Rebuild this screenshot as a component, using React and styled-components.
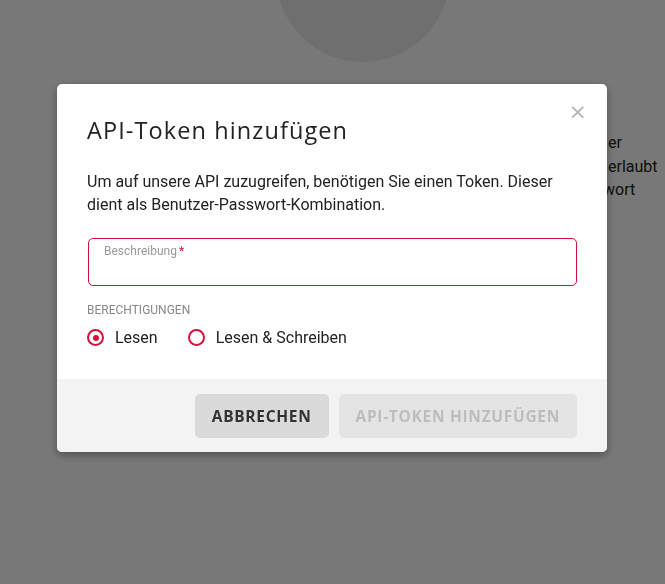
import React from "react";
import styled, { createGlobalStyle } from "styled-components";

const Global = createGlobalStyle`
  html, body { margin: 0; padding: 0; background: #ffffff; }
  body { font-family: Roboto, "Liberation Sans", sans-serif; color: #222; overflow: hidden; }
  * { box-sizing: border-box; }
`;

const Page = styled.div`
  width: 665px;
  height: 584px;
  position: relative;
  overflow: hidden;
  background: #fff;
`;

const Avatar = styled.div`
  width: 174px;
  height: 174px;
  border-radius: 50%;
  background: #ececec;
  margin: -112px 0 0 276px;
`;

const BgText = styled.div`
  margin: 69px 0 0 608px;
  font-size: 16px;
  line-height: 23.5px;
  color: #222;
  white-space: nowrap;
`;

const BgLine = styled.div`
  margin-left: ${(p) => p.$shift || 0}px;
`;

const Overlay = styled.div`
  position: fixed;
  inset: 0;
  background: rgba(0, 0, 0, 0.53);
  display: flex;
  justify-content: center;
  align-items: flex-start;
  padding: 84px 1px 0 0;
`;

const Modal = styled.div`
  width: 550px;
  background: #fff;
  border-radius: 5px;
  box-shadow: 0 3px 8px rgba(0, 0, 0, 0.35);
  overflow: hidden;
  position: relative;
`;

const Close = styled.button`
  position: absolute;
  top: 18px;
  right: 20px;
  border: 0;
  background: none;
  padding: 0;
  font-size: 22px;
  line-height: 20px;
  color: #b5b5b5;
  font-family: "DejaVu Sans", sans-serif;
  cursor: pointer;
`;

const Body = styled.div`
  padding: 31px 30px 32px 30px;
`;

const Title = styled.h2`
  margin: 0;
  font-family: "Open Sans", "Liberation Sans", sans-serif;
  font-weight: 400;
  font-size: 23.5px;
  letter-spacing: 1.1px;
  line-height: 30px;
  color: #222;
`;

const Text = styled.p`
  margin: 25px 0 0 0;
  font-size: 16px;
  line-height: 23px;
  color: #222;
`;

const Field = styled.div`
  margin: 22px 0 0 1px;
  height: 48px;
  border: 1px solid #d4103c;
  border-radius: 5px;
  padding: 1px 15px;
`;

const FieldLabel = styled.span`
  font-size: 12px;
  color: #999;
  line-height: 14px;
`;

const Req = styled.span`
  color: #d4103c;
  margin-left: 2px;
`;

const SectionLabel = styled.div`
  margin-top: 17px;
  font-size: 12px;
  color: #888;
  line-height: 14px;
`;

const RadioRow = styled.div`
  display: flex;
  gap: 30px;
  margin-top: 11px;
`;

const RadioItem = styled.label`
  display: flex;
  align-items: center;
  gap: 11px;
  font-size: 16px;
  color: #222;
  cursor: pointer;
`;

const RadioCircle = styled.span`
  width: 17px;
  height: 17px;
  border-radius: 50%;
  border: 2px solid #d4103c;
  display: flex;
  align-items: center;
  justify-content: center;
  &::after {
    content: "";
    width: 6px;
    height: 6px;
    border-radius: 50%;
    background: ${(p) => (p.$checked ? "#d4103c" : "transparent")};
  }
`;

const Footer = styled.div`
  background: #f3f3f3;
  padding: 15px 30px 14px;
  display: flex;
  justify-content: flex-end;
  gap: 10px;
`;

const Button = styled.button`
  height: 44px;
  border: 0;
  border-radius: 5px;
  padding: 0 17px;
  font-family: "Open Sans", "Liberation Sans", sans-serif;
  font-weight: 700;
  font-size: 15.5px;
  letter-spacing: 0.7px;
  background: ${(p) => (p.$disabled ? "#e4e4e4" : "#dadada")};
  color: ${(p) => (p.$disabled ? "#bdbdbd" : "#333")};
  cursor: ${(p) => (p.$disabled ? "default" : "pointer")};
`;

export default function App() {
  return (
    <>
      <Global />
      <Page>
        <Avatar />
        <BgText>
          <BgLine>er</BgLine>
          <BgLine>erlaubt</BgLine>
          <BgLine $shift={-5}>wort</BgLine>
        </BgText>
        <Overlay>
          <Modal>
            <Close aria-label="Schließen">×</Close>
            <Body>
              <Title>API-Token hinzufügen</Title>
              <Text>
                Um auf unsere API zuzugreifen, benötigen Sie einen Token. Dieser
                dient als Benutzer-Passwort-Kombination.
              </Text>
              <Field>
                <FieldLabel>
                  Beschreibung<Req>*</Req>
                </FieldLabel>
              </Field>
              <SectionLabel>BERECHTIGUNGEN</SectionLabel>
              <RadioRow>
                <RadioItem>
                  <RadioCircle $checked />
                  Lesen
                </RadioItem>
                <RadioItem>
                  <RadioCircle />
                  Lesen &amp; Schreiben
                </RadioItem>
              </RadioRow>
            </Body>
            <Footer>
              <Button>ABBRECHEN</Button>
              <Button $disabled>API-TOKEN HINZUFÜGEN</Button>
            </Footer>
          </Modal>
        </Overlay>
      </Page>
    </>
  );
}
